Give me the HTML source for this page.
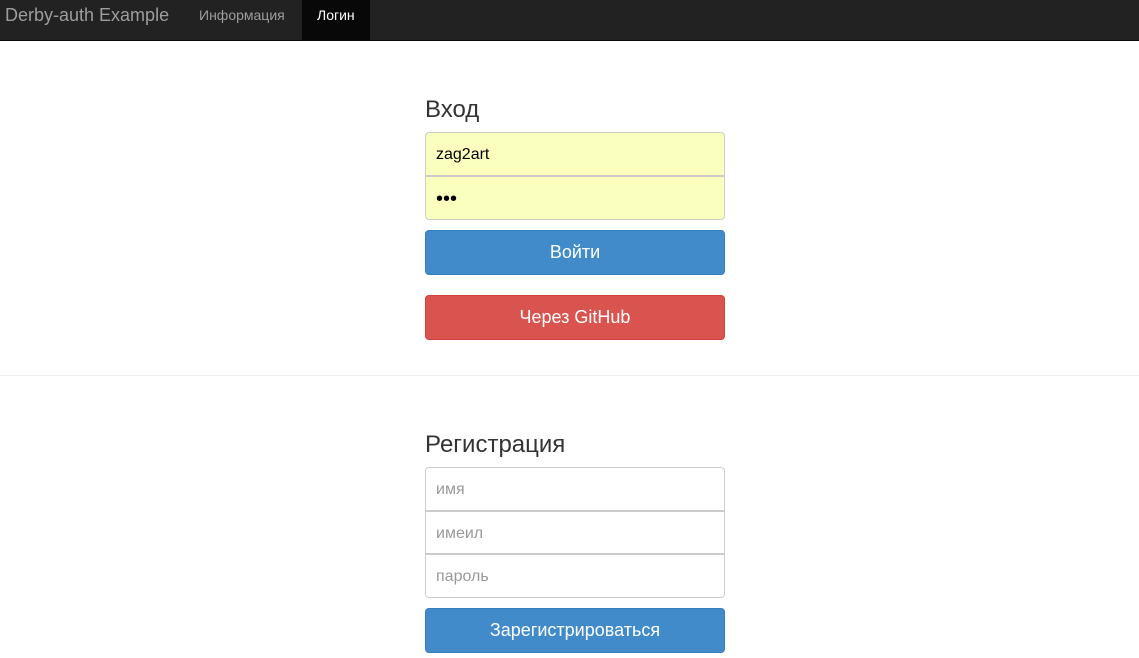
<!DOCTYPE html><html><head><meta charset="utf-8"><style>
*{box-sizing:border-box}body{margin:0;font-family:"Liberation Sans",sans-serif;background:#fff;width:1139px;height:658px;overflow:hidden;color:#333}
.nav{height:41px;background:#222;border-bottom:1px solid #080808;position:relative}
.brand{position:absolute;left:5px;top:5px;font-size:18px;color:#9d9d9d;line-height:20px}
.ni{position:absolute;top:0;height:40px;line-height:31px;font-size:14px;color:#9d9d9d;padding:0 15px}
h3{position:absolute;left:425px;margin:0;font-size:24px;font-weight:400;line-height:26px}
.in{position:absolute;left:425px;width:300px;height:44px;border:1px solid #ccc;font-size:16px;padding:0 10px;line-height:44px;color:#999}
.y{background:#faffbd;color:#000}
.b{position:absolute;left:425px;width:300px;height:45px;border-radius:4px;color:#fff;font-size:18px;text-align:center;line-height:43px}
</style></head><body>
<div class="nav"><div class="brand">Derby-auth Example</div><div class="ni" style="left:184px">Информация</div><div class="ni" style="left:302px;width:68px;background:#080808;color:#fff">Логин</div></div>
<h3 style="top:97px">Вход</h3>
<div class="in y" style="top:132px;border-radius:4px 4px 0 0">zag2art</div>
<div class="in y" style="top:176px;border-radius:0 0 4px 4px;font-size:20px;line-height:44px">•••</div>
<div class="b" style="top:230px;background:#428bca;border:1px solid #357ebd">Войти</div>
<div class="b" style="top:295px;background:#d9534f;border:1px solid #d43f3a">Через GitHub</div>
<div style="position:absolute;left:0;right:0;top:375px;border-top:1px solid #eee"></div>
<h3 style="top:432px">Регистрация</h3>
<div class="in" style="top:467px;border-radius:4px 4px 0 0">имя</div>
<div class="in" style="top:511px;height:43px">имеил</div>
<div class="in" style="top:554px;border-radius:0 0 4px 4px">пароль</div>
<div class="b" style="top:608px;background:#428bca;border:1px solid #357ebd">Зарегистрироваться</div>
</body></html>
